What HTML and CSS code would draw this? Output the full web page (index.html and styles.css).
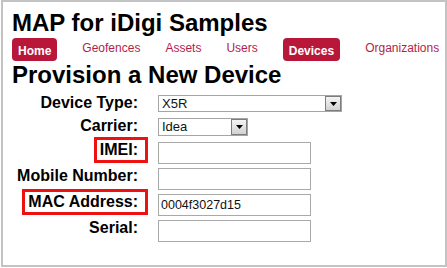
FILE: index.html
```html
<!DOCTYPE html>
<html lang="en">
<head>
    <meta charset="UTF-8">
    <title>MAP for iDigi Samples</title>
    <link rel="stylesheet" href="styles.css">
</head>
<body>
    <div class="frame">
        <h1>MAP for iDigi Samples</h1>
        <div class="nav">
            <a class="nav-link active" href="#">Home</a>
            <a class="nav-link" href="#">Geofences</a>
            <a class="nav-link" href="#">Assets</a>
            <a class="nav-link" href="#">Users</a>
            <a class="nav-link active" href="#">Devices</a>
            <a class="nav-link" href="#">Organizations</a>
        </div>
        <h2>Provision a New Device</h2>
        <div class="form">
            <label class="field-label">Device Type:</label>
            <span class="select-wrap wide">
                <select><option>X5R</option></select>
                <span class="drop-btn"><svg width="7" height="4" viewBox="0 0 7 4"><path d="M0 0h7L3.5 4z" fill="#000"/></svg></span>
            </span>

            <label class="field-label">Carrier:</label>
            <span class="select-wrap narrow">
                <select><option>Idea</option></select>
                <span class="drop-btn"><svg width="7" height="4" viewBox="0 0 7 4"><path d="M0 0h7L3.5 4z" fill="#000"/></svg></span>
            </span>

            <label class="field-label marked">IMEI:</label>
            <input type="text" class="text-input">

            <label class="field-label">Mobile Number:</label>
            <input type="text" class="text-input">

            <label class="field-label marked">MAC Address:</label>
            <input type="text" class="text-input" value="0004f3027d15">

            <label class="field-label">Serial:</label>
            <input type="text" class="text-input">
        </div>
    </div>
</body>
</html>
```

FILE: styles.css
```css
body {
    margin: 0;
    padding: 0;
    font-family: "Liberation Sans", Arial, sans-serif;
    background: #fff;
    color: #000;
}
.frame {
    box-sizing: border-box;
    width: 446px;
    height: 267px;
    margin-left: 1px;
    border: 2px solid #c3c3c3;
    padding: 0 0 0 9px;
}
h1 {
    font-size: 24px;
    line-height: 28px;
    margin: 7px 0 0 0;
}
.nav {
    display: flex;
    align-items: flex-start;
    gap: 25px;
    margin-top: 1px;
    height: 23px;
}
.nav-link {
    font-size: 12px;
    line-height: 14px;
    color: #b31d4a;
    text-decoration: none;
    padding: 3px 0 0 0;
}
.nav-link.active {
    background: #b8173a;
    color: #fff;
    font-weight: bold;
    border-radius: 4px;
    padding: 6px 6px 3px 6px;
}
h2 {
    font-size: 24px;
    line-height: 28px;
    margin: 0;
}
.form {
    display: grid;
    grid-template-columns: 136px auto;
    grid-template-rows: 23px 24px 26px 26px 26px 26px;
    column-gap: 10px;
    justify-content: start;
    margin-top: 6px;
}
.field-label {
    justify-self: end;
    align-self: start;
    margin-top: -5px;
    font-size: 16px;
    font-weight: bold;
    line-height: 18px;
    padding: 1px 7px 1px 3px;
    border: 3px solid transparent;
    white-space: nowrap;
}
.field-label.marked {
    border-color: #ee1111;
}
.select-wrap {
    position: relative;
    display: inline-block;
    align-self: start;
    justify-self: start;
}
.select-wrap select {
    appearance: none;
    -webkit-appearance: none;
    box-sizing: border-box;
    display: block;
    border: 1px solid #a5a5a5;
    border-radius: 0;
    background: #fff;
    font-family: "Liberation Sans", Arial, sans-serif;
    font-size: 13px;
    color: #111;
    padding: 0 0 0 3px;
    margin: 0;
}
.select-wrap.wide select {
    width: 184px;
    height: 17px;
    line-height: 15px;
}
.select-wrap.narrow select {
    width: 90px;
    height: 18px;
    line-height: 16px;
}
.drop-btn {
    position: absolute;
    top: 1px;
    right: 1px;
    bottom: 1px;
    width: 16px;
    box-sizing: border-box;
    border: 1px solid #7d7d7d;
    background: linear-gradient(#f4f4f4, #d2d2d2);
    display: flex;
    align-items: center;
    justify-content: center;
}
.text-input {
    box-sizing: border-box;
    width: 153px;
    height: 22px;
    border: 1px solid #a9a9a9;
    padding: 0 2px;
    margin: 0;
    font-family: "Liberation Sans", Arial, sans-serif;
    font-size: 12.5px;
    color: #111;
    align-self: start;
    justify-self: start;
}
```
